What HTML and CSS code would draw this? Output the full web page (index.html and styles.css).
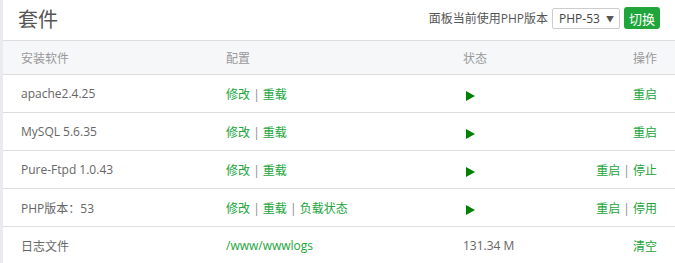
FILE: index.html
```html
<!DOCTYPE html>
<html lang="zh-CN">
<head>
    <meta charset="UTF-8">
    <title>套件</title>
    <link rel="stylesheet" href="styles.css">
</head>
<body>
    <div class="panel">
        <div class="title-bar">
            <h2>套件</h2>
            <div class="php-switch">
                <span class="label">面板当前使用PHP版本</span>
                <div class="select-box">
                    <span>PHP-53</span>
                    <span class="arrow">▼</span>
                </div>
                <button class="btn-green">切换</button>
            </div>
        </div>
        <table class="soft-table">
            <colgroup>
                <col class="c1"><col class="c2"><col class="c3"><col class="c4">
            </colgroup>
            <thead>
                <tr><th>安装软件</th><th>配置</th><th>状态</th><th class="right">操作</th></tr>
            </thead>
            <tbody>
                <tr>
                    <td>apache2.4.25</td>
                    <td><a>修改</a> <i>|</i> <a>重载</a></td>
                    <td><span class="play"></span></td>
                    <td class="right"><a>重启</a></td>
                </tr>
                <tr>
                    <td>MySQL 5.6.35</td>
                    <td><a>修改</a> <i>|</i> <a>重载</a></td>
                    <td><span class="play"></span></td>
                    <td class="right"><a>重启</a></td>
                </tr>
                <tr>
                    <td>Pure-Ftpd 1.0.43</td>
                    <td><a>修改</a> <i>|</i> <a>重载</a></td>
                    <td><span class="play"></span></td>
                    <td class="right"><a>重启</a> <i>|</i> <a>停止</a></td>
                </tr>
                <tr>
                    <td>PHP版本：53</td>
                    <td><a>修改</a> <i>|</i> <a>重载</a> <i>|</i> <a>负载状态</a></td>
                    <td><span class="play"></span></td>
                    <td class="right"><a>重启</a> <i>|</i> <a>停用</a></td>
                </tr>
                <tr>
                    <td>日志文件</td>
                    <td><a>/www/wwwlogs</a></td>
                    <td>131.34 M</td>
                    <td class="right"><a>清空</a></td>
                </tr>
            </tbody>
        </table>
    </div>
</body>
</html>
```

FILE: styles.css
```css
body {
    margin: 0;
    background-color: #e9ebef; /* grey strip on the left */
    font-family: "Open Sans", "Noto Sans CJK SC", sans-serif;
    font-size: 12px;
    color: #666;
}
.panel {
    margin-left: 3px;
    background-color: #fff;
    height: 263px;
    overflow: hidden;
}
.title-bar {
    display: flex;
    align-items: center;
    justify-content: space-between;
    height: 40px;
    padding: 0 15px;
    border-bottom: 1px solid #ddd;
}
.title-bar h2 {
    margin: 0;
    font-size: 20px;
    font-weight: normal;
    color: #555;
    margin-top: -4px;
}
.php-switch {
    display: flex;
    align-items: center;
    margin-top: -4px;
}
.php-switch .label {
    color: #555;
    margin-right: 4px;
}
.select-box {
    display: flex;
    align-items: center;
    justify-content: space-between;
    box-sizing: border-box;
    width: 68px;
    height: 21px;
    padding: 0 5px 0 6px;
    border: 1px solid #ccc;
    border-radius: 2px;
    color: #444;
}
.select-box .arrow {
    font-size: 8px;
    color: #555;
}
.btn-green {
    margin-left: 4px;
    height: 22px;
    width: 36px;
    padding: 0;
    border: none;
    border-radius: 3px;
    background-color: #20a53a;
    color: #fff;
    font-family: inherit;
    font-size: 13px;
}
.soft-table {
    width: 100%;
    border-collapse: collapse;
    table-layout: fixed;
}
.soft-table col.c1 { width: 205px; }
.soft-table col.c2 { width: 237px; }
.soft-table col.c3 { width: 120px; }
.soft-table th {
    height: 33px;
    padding: 0 18px;
    background-color: #f6f7f9;
    border-bottom: 1px solid #ddd;
    font-weight: normal;
    color: #999;
    text-align: left;
}
.soft-table td {
    height: 37px;
    padding: 0 18px;
    border-bottom: 1px solid #ddd;
    white-space: nowrap;
}
.soft-table .right {
    text-align: right;
}
.soft-table a {
    color: #20a53a;
}
.soft-table i {
    font-style: normal;
    color: #888;
}
.play {
    display: inline-block;
    width: 0;
    height: 0;
    margin: 3px 0 0 3px;
    border-top: 5px solid transparent;
    border-bottom: 5px solid transparent;
    border-left: 9px solid #008000;
    vertical-align: middle;
}
```
